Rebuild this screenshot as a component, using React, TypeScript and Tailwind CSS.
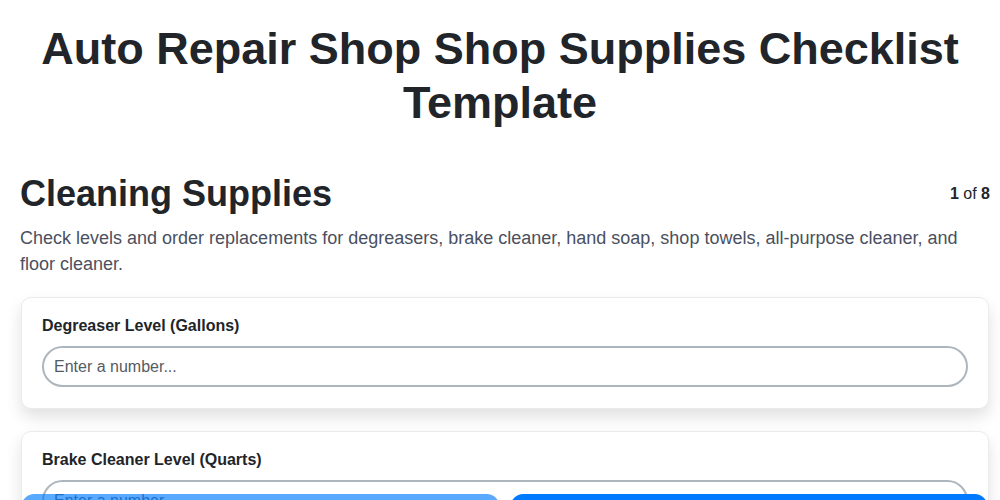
import React from "react";

type Field = { label: string };

const fields: Field[] = [
  { label: "Degreaser Level (Gallons)" },
  { label: "Brake Cleaner Level (Quarts)" },
  { label: "Hand Soap Level (Bottles)" },
];

function NumberCard({ label }: Field) {
  return (
    <div className="rounded-[10px] border border-[#ebebef] bg-white px-5 pt-[18px] pb-[21px] shadow-[0_8px_16px_rgba(0,0,0,0.12)]">
      <label className="mb-[10px] block text-[16px] font-bold leading-5 text-[#212529]">
        {label}
      </label>
      <input
        type="number"
        placeholder="Enter a number..."
        className="block h-[41px] w-full rounded-full border-2 border-[#adb5bd] bg-white px-[10px] text-[16px] text-[#212529] outline-none placeholder:text-[#555b63]"
      />
    </div>
  );
}

export default function App() {
  return (
    <div className="min-h-screen bg-white font-['Liberation_Sans',Arial,sans-serif] text-[#212529]">
      <h1 className="px-5 pt-[22px] text-center text-[45px] font-bold leading-[1.2] text-[#212529]">
        Auto Repair Shop Shop Supplies Checklist Template
      </h1>

      <main className="pl-5 pr-[10px] pt-[42px] pb-24">
        <div className="mb-[10px] flex items-center justify-between">
          <h2 className="text-[36px] font-bold leading-[1.2] text-[#212529]">
            Cleaning Supplies
          </h2>
          <div className="text-[16px] text-[#212529]">
            <span className="font-bold">1</span> of <span className="font-bold">8</span>
          </div>
        </div>
        <p className="mb-5 text-[18px] leading-[26px] text-[#4a5060]">
          Check levels and order replacements for degreasers, brake cleaner, hand soap, shop
          towels, all-purpose cleaner, and floor cleaner.
        </p>

        <div className="flex flex-col gap-[22px] px-px">
          {fields.map((f) => (
            <NumberCard key={f.label} label={f.label} />
          ))}
        </div>
      </main>

      <div className="fixed left-0 right-0 top-[494px] flex gap-3 pl-[22px] pr-[13px]">
        <button
          disabled
          className="h-12 flex-1 rounded-xl bg-[#007bff] text-[16px] font-bold text-white opacity-65"
        >
          Previous
        </button>
        <button className="h-12 flex-1 rounded-xl bg-[#007bff] text-[16px] font-bold text-white">
          Next
        </button>
      </div>
    </div>
  );
}
